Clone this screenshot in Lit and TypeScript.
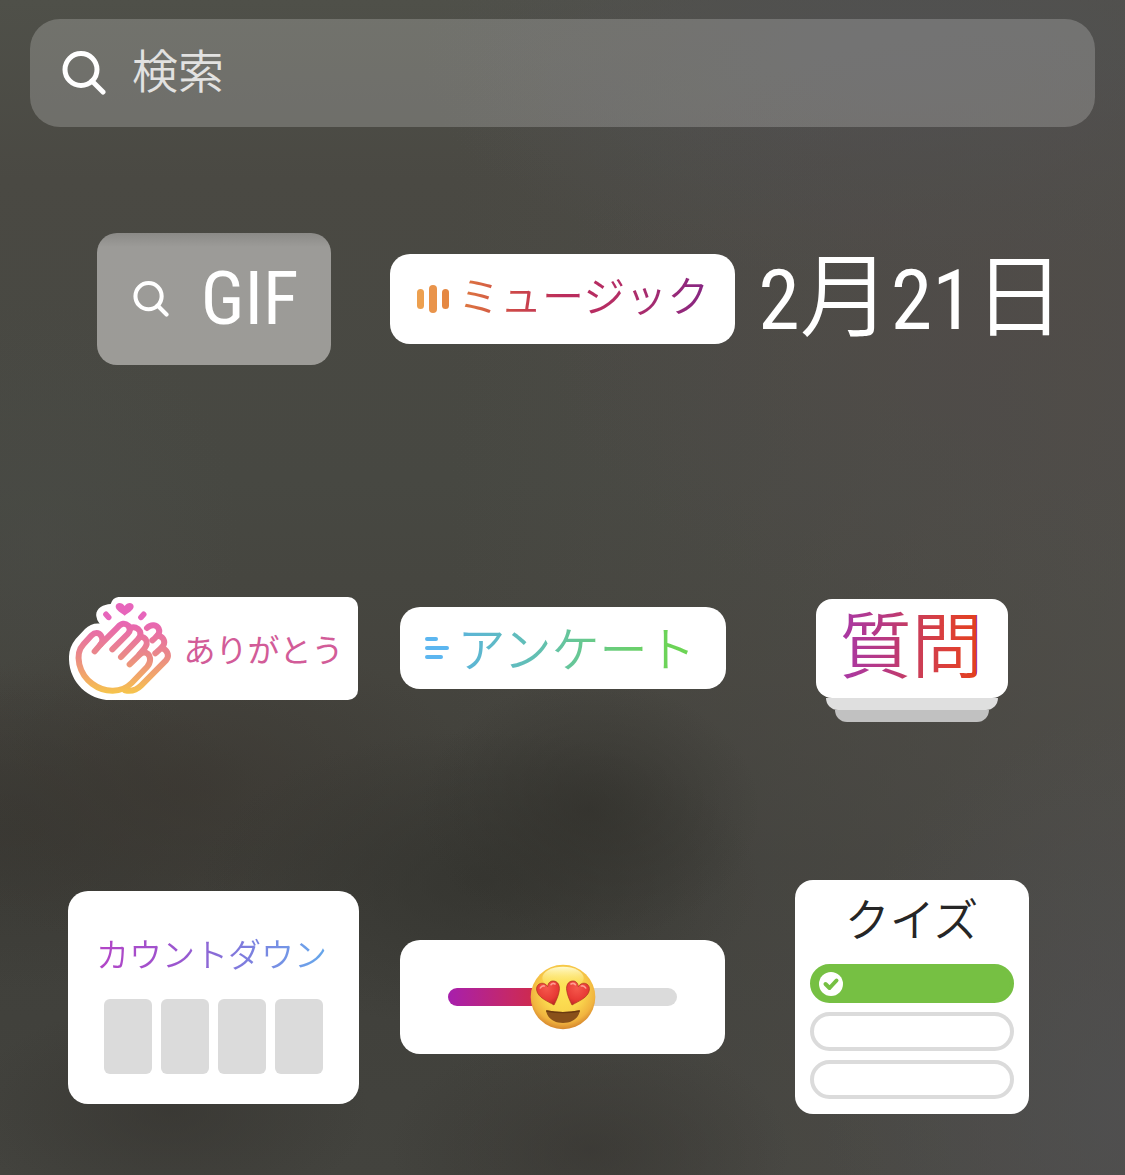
import { LitElement, html, css, svg } from "lit";
import { customElement, property } from "lit/decorators.js";

const magnifier = (cls: string, stroke: number) => html`
  <svg class=${cls} viewBox="0 0 44 44" aria-hidden="true">
    <circle cx="19" cy="18.500" r="16" fill="none" stroke="#fff" stroke-width=${stroke}></circle>
    <path d="M30 30 41 41" fill="none" stroke="#fff" stroke-width=${stroke} stroke-linecap="round"></path>
  </svg>
`;

@customElement("search-field")
class SearchField extends LitElement {
  static styles = css`
    :host {
      display: block;
    }
    .bar {
      display: flex;
      align-items: center;
      gap: 26px;
      height: 108px;
      padding: 0 32px;
      box-sizing: border-box;
      border-radius: 30px;
      background: rgba(255, 255, 255, 0.2);
    }
    .icon {
      width: 44px;
      height: 44px;
      flex: none;
    }
    .input {
      flex: 1;
      min-width: 0;
      height: 80px;
      padding: 0 0 10px;
      box-sizing: border-box;
      border: 0;
      outline: 0;
      background: none;
      color: #fff;
      font-family: "Noto Sans CJK JP", sans-serif;
      font-weight: 350;
      font-size: 46px;
    }
    .input::placeholder {
      color: #e2e2e1;
      opacity: 1;
    }
  `;

  render() {
    return html`
      <label class="bar">
        ${magnifier("icon", 5)}
        <input class="input" type="text" placeholder="検索" aria-label="検索" />
      </label>
    `;
  }
}

@customElement("emoji-slider")
class EmojiSlider extends LitElement {
  @property({ type: Number }) value = 50;

  static styles = css`
    :host {
      display: block;
      width: 325px;
    }
    .card {
      display: flex;
      align-items: center;
      height: 114px;
      padding: 0 48px;
      box-sizing: border-box;
      border-radius: 20px;
      background: #fff;
    }
    .rail {
      position: relative;
      flex: 1;
      height: 18px;
    }
    .range {
      display: block;
      width: 100%;
      height: 18px;
      margin: 0;
      appearance: none;
      border-radius: 9px;
      background: linear-gradient(90deg, #a71fad 0%, #c62866 28%, #d82c2e 50%, #dbdbdb 50%);
    }
    .range::-webkit-slider-thumb {
      appearance: none;
      width: 64px;
      height: 64px;
      background: transparent;
    }
    .face {
      position: absolute;
      top: 50%;
      width: 66px;
      height: 66px;
      transform: translate(-50%, -50%);
      pointer-events: none;
    }
  `;

  render() {
    return html`
      <div class="card">
        <div class="rail">
          <input class="range" type="range" min="0" max="100" .value=${String(this.value)} aria-label="スライダー" />
          <svg class="face" style="left:${this.value}%" viewBox="0 0 198 198" aria-hidden="true">
            <defs>
              <radialGradient id="skin" cx="0.5" cy="0.4" r="0.62">
                <stop offset="0" stop-color="#fde456"></stop>
                <stop offset="0.5" stop-color="#fad64d"></stop>
                <stop offset="0.8" stop-color="#f1b43f"></stop>
                <stop offset="1" stop-color="#d07c2a"></stop>
              </radialGradient>
              <linearGradient id="shine" x1="0" y1="0" x2="0" y2="1">
                <stop offset="0" stop-color="#fffbd0"></stop>
                <stop offset="1" stop-color="#fde654" stop-opacity="0"></stop>
              </linearGradient>
              <radialGradient id="heart" cx="0.45" cy="0.3" r="0.75">
                <stop offset="0" stop-color="#f5584c"></stop>
                <stop offset="0.65" stop-color="#e83a35"></stop>
                <stop offset="1" stop-color="#ba2422"></stop>
              </radialGradient>
            </defs>
            <circle cx="99" cy="99" r="97" fill="url(#skin)"></circle>
            <ellipse cx="99" cy="42" rx="62" ry="34" fill="url(#shine)"></ellipse>
            <path
              d="M72 123C53 112 24 101 20 79C17 62 33 53 45 60C49 62 51 65 53 68C54 56 62 50 71 51C84 52 90 65 88 79C86 95 78 111 72 123Z"
              fill="url(#heart)" stroke="#a72a1d" stroke-width="2"
            ></path>
            <path
              d="M126 123C145 112 174 101 178 79C181 62 165 53 153 60C149 62 147 65 145 68C144 56 136 50 127 51C114 52 108 65 110 79C112 95 120 111 126 123Z"
              fill="url(#heart)" stroke="#a72a1d" stroke-width="2"
            ></path>
            <path d="M31 72Q35 64 43 66M63 62Q68 56 75 60M154 66Q163 64 167 72M123 60Q130 56 136 62" fill="none" stroke="#ff9d92" stroke-width="5" stroke-linecap="round"></path>
            <path d="M48 139Q99 149 150 139C148 160 128 177 99 177C70 177 50 160 48 139Z" fill="#89501a"></path>
            <path d="M49 141Q99 151 149 141" fill="none" stroke="#6b3a10" stroke-width="4"></path>
          </svg>
        </div>
      </div>
    `;
  }
}

@customElement("app-root")
class AppRoot extends LitElement {
  static styles = css`
    :host {
      display: block;
      min-height: 100vh;
      box-sizing: border-box;
      padding: 19px 30px 56px;
      font-family: "Noto Sans CJK JP", sans-serif;
      font-weight: 350;
      background:
        radial-gradient(ellipse 170px 130px at 590px 810px, rgba(48, 47, 42, 0.65), rgba(48, 47, 42, 0)),
        radial-gradient(ellipse 280px 150px at 480px 880px, rgba(50, 50, 45, 0.7), rgba(50, 50, 45, 0)),
        radial-gradient(ellipse 300px 160px at 180px 790px, rgba(57, 52, 46, 0.55), rgba(57, 52, 46, 0)),
        radial-gradient(ellipse 260px 160px at 10px 830px, rgba(54, 53, 48, 0.6), rgba(54, 53, 48, 0)),
        radial-gradient(ellipse 200px 110px at 170px 1110px, rgba(53, 51, 47, 0.6), rgba(53, 51, 47, 0)),
        radial-gradient(ellipse 200px 120px at 590px 1150px, rgba(54, 52, 48, 0.6), rgba(54, 52, 48, 0)),
        radial-gradient(ellipse 200px 240px at 40px 540px, rgba(74, 76, 71, 0.5), rgba(74, 76, 71, 0)),
        radial-gradient(ellipse 460px 300px at 1000px 330px, rgba(80, 75, 73, 0.7), rgba(80, 75, 73, 0)),
        radial-gradient(ellipse 300px 400px at 1125px 1110px, rgba(80, 80, 82, 0.7), rgba(80, 80, 82, 0)),
        radial-gradient(ellipse 480px 220px at 900px 60px, rgba(81, 81, 82, 0.9), rgba(81, 81, 82, 0)),
        linear-gradient(90deg, rgba(66, 66, 60, 0) 40%, rgba(82, 80, 76, 0.7) 100%),
        linear-gradient(180deg, #4f5049 0, #4a4943 180px, #474842 480px, #45443e 680px, #3f3f3a 860px, #43433e 1175px);
    }
    .grid {
      display: grid;
      grid-template-columns: repeat(3, minmax(0, 1fr));
      grid-auto-rows: 240px;
      row-gap: 109px;
      place-items: center;
      margin: 0;
      padding: 52px 9px 0;
      list-style: none;
    }
    .cell {
      display: flex;
      justify-content: center;
    }
    .sticker {
      display: flex;
      align-items: center;
      box-sizing: border-box;
      margin: 0;
      padding: 0;
      border: 0;
      background: #fff;
      color: #262626;
      font: inherit;
      white-space: nowrap;
      cursor: pointer;
    }
    .inked {
      color: transparent;
      background-clip: text;
      -webkit-background-clip: text;
    }

    .gif {
      width: 234px;
      height: 132px;
      padding: 0 32px 0 36px;
      justify-content: space-between;
      border-radius: 20px;
      color: #fff;
      background: linear-gradient(180deg, #8b8a87 0, #9c9b98 14px, #9c9b97 100%);
    }
    .gif-icon {
      width: 36px;
      height: 36px;
    }
    .narrow {
      font-family: "Liberation Sans Narrow", "Roboto Condensed", "Liberation Sans", sans-serif;
      font-weight: 400;
    }
    .gif-text {
      font-size: 74px;
      line-height: 80px;
    }

    .music {
      width: 345px;
      height: 90px;
      padding: 0 22px 0 26px;
      gap: 8px;
      border-radius: 20px;
    }
    .bars {
      width: 34px;
      height: 30px;
      flex: none;
    }
    .music-text {
      padding-bottom: 10px;
      font-size: 42px;
      line-height: 60px;
      background-image: linear-gradient(90deg, #df7c3e 0%, #cd4848 22%, #bb2c5c 42%, #b32d66 66%, #852684 100%);
    }

    .date {
      padding-bottom: 8px;
      background: none;
      color: #fff;
      font-size: 91px;
      line-height: 120px;
    }
    .date-number {
      font-size: 84px;
    }

    .thanks {
      background: none;
    }
    .clap {
      width: 108px;
      height: 103px;
      flex: none;
    }
    .thanks-text {
      height: 103px;
      padding: 0 14px 0 6px;
      border-radius: 0 10px 10px 0;
      background: #fff;
      color: #d25c98;
      font-size: 32px;
      font-weight: 400;
      line-height: 103px;
    }

    .poll {
      width: 326px;
      height: 82px;
      padding: 0 26px 0 24px;
      gap: 8px;
      border-radius: 20px;
    }
    .lines {
      width: 26px;
      height: 24px;
      flex: none;
    }
    .poll-text {
      padding-bottom: 4px;
      font-size: 48px;
      line-height: 60px;
      background-image: linear-gradient(90deg, #5bb4da 0%, #62bfb4 32%, #68c98c 55%, #6cd35a 85%, #6cd552 100%);
    }

    .question {
      flex-direction: column;
      padding-top: 24px;
      background: none;
    }
    .question-card {
      z-index: 1;
      width: 192px;
      height: 99px;
      padding: 0 24px;
      box-sizing: border-box;
      border-radius: 16px;
      background: #fff;
    }
    .question-text {
      display: block;
      font-size: 72px;
      line-height: 84px;
      background-image: linear-gradient(90deg, #a838a6 0%, #b9397f 35%, #c93d5a 55%, #dd3f38 80%, #e2401f 100%);
      background-size: 136px 100%;
    }
    .layer {
      width: 172px;
      height: 12px;
      border-radius: 0 0 14px 14px;
      background: #dfdfdf;
    }
    .layer-back {
      width: 154px;
      background: #c1c1c1;
    }

    .countdown {
      flex-direction: column;
      gap: 18px;
      width: 291px;
      height: 213px;
      padding: 34px 28px 30px;
      border-radius: 20px;
    }
    .countdown-text {
      width: 100%;
      font-size: 33px;
      line-height: 56px;
      text-align: left;
      background-image: linear-gradient(90deg, #b344c6 0%, #9a56cf 35%, #7f78dc 60%, #719ae8 85%, #63a8ea 100%);
    }
    .tiles {
      display: flex;
      gap: 9px;
    }
    .tile {
      width: 48px;
      height: 75px;
      border-radius: 6px;
      background: #dbdbdb;
    }

    .quiz {
      flex-direction: column;
      gap: 9px;
      width: 234px;
      height: 234px;
      padding: 8px 15px 15px;
      border-radius: 18px;
    }
    .quiz-title {
      padding-bottom: 8px;
      font-size: 45px;
      line-height: 59px;
    }
    .option {
      display: flex;
      align-items: center;
      width: 100%;
      height: 39px;
      padding: 0 5px;
      box-sizing: border-box;
      border: 4px solid #dbdbdb;
      border-radius: 20px;
    }
    .option-right {
      border-color: #76c043;
      background: #76c043;
    }
    .check {
      width: 24px;
      height: 24px;
    }
  `;

  private clap() {
    return svg`
      <svg class="clap" viewBox="12 6 324 309" aria-hidden="true">
        <defs>
          <linearGradient id="clap-ink" gradientUnits="userSpaceOnUse" x1="0" y1="50" x2="0" y2="296">
            <stop offset="0" stop-color="#e75fc4"></stop>
            <stop offset="0.2" stop-color="#e86bab"></stop>
            <stop offset="0.55" stop-color="#ea8a86"></stop>
            <stop offset="0.8" stop-color="#f2a867"></stop>
            <stop offset="1" stop-color="#f6c54b"></stop>
          </linearGradient>
        </defs>
        <path fill="#fff" d="M336 6H160Q143 8 137 27C114 28 90 42 94 64Q95 76 104 86C88 84 72 90 60 102L32 132C16 152 11 172 12 194C14 262 70 315 136 315H336Z"></path>
        <g fill="none" stroke="url(#clap-ink)" stroke-width="18" stroke-linecap="round" stroke-linejoin="round">
          <path d="M89 169 107 148Q117 136 108 122C101 111 89 112 80 121L56 147C41 163 37 182 43 208C55 257 100 288 144 287C168 287 185 279 200 264L246 216C258 203 258 186 248 176C241 170 231 172 224 179L194 208"></path>
          <path d="M107 148 158 97C169 84 180 83 190 92C197 101 196 109 188 117L142 163"></path>
          <path d="M194 100C207 93 219 98 225 109C229 119 226 126 218 134L168 186"></path>
          <path d="M228 125C241 126 247 138 245 148C243 156 240 161 224 177"></path>
          <path d="M246 99C259 86 275 89 281 101C286 112 281 120 262 136"></path>
          <path d="M278 122C293 123 300 137 297 147C295 155 288 160 271 175"></path>
          <path d="M294 160C310 169 313 184 303 196L228 272C214 286 199 290 180 286"></path>
        </g>
        <path d="M179 62C168 52 153 46 152 35C152 22 171 20 179 33C187 20 206 22 206 35C205 46 190 52 179 62Z" fill="#e765bb"></path>
        <path d="M123 58 131 67M236 58 228 67" fill="none" stroke="#e765bb" stroke-width="17" stroke-linecap="round"></path>
      </svg>
    `;
  }

  render() {
    return html`
      <search-field></search-field>
      <ul class="grid">
        <li class="cell">
          <button class="sticker gif" type="button">
            ${magnifier("gif-icon", 5)}
            <span class="narrow gif-text">GIF</span>
          </button>
        </li>
        <li class="cell">
          <button class="sticker music" type="button">
            <svg class="bars" viewBox="0 0 34 30" aria-hidden="true">
              <rect x="1" y="5" width="7" height="20" rx="3.500" fill="#eda04f"></rect>
              <rect x="13" y="1" width="8" height="28" rx="4" fill="#e9944b"></rect>
              <rect x="26" y="5" width="7" height="20" rx="3.500" fill="#e58843"></rect>
            </svg>
            <span class="inked music-text">ミュージック</span>
          </button>
        </li>
        <li class="cell">
          <button class="sticker date" type="button">
            <span><span class="narrow date-number">2</span>月<span class="narrow date-number">21</span>日</span>
          </button>
        </li>
        <li class="cell">
          <button class="sticker thanks" type="button">
            ${this.clap()}
            <span class="thanks-text">ありがとう</span>
          </button>
        </li>
        <li class="cell">
          <button class="sticker poll" type="button">
            <svg class="lines" viewBox="0 0 26 24" aria-hidden="true">
              <path d="M3 3H12M3 12H23M3 21H17" stroke="#5cb6f0" stroke-width="4" stroke-linecap="round"></path>
            </svg>
            <span class="inked poll-text">アンケート</span>
          </button>
        </li>
        <li class="cell">
          <button class="sticker question" type="button">
            <span class="question-card"><span class="inked question-text">質問</span></span>
            <span class="layer"></span>
            <span class="layer layer-back"></span>
          </button>
        </li>
        <li class="cell">
          <button class="sticker countdown" type="button">
            <span class="inked countdown-text">カウントダウン</span>
            <span class="tiles">${[0, 1, 2, 3].map(() => html`<span class="tile"></span>`)}</span>
          </button>
        </li>
        <li class="cell"><emoji-slider></emoji-slider></li>
        <li class="cell">
          <button class="sticker quiz" type="button">
            <span class="quiz-title">クイズ</span>
            <span class="option option-right">
              <svg class="check" viewBox="0 0 24 24" aria-hidden="true">
                <circle cx="12" cy="12" r="12" fill="#fff"></circle>
                <path d="M6.500 12 10.500 16 17.500 8.500" fill="none" stroke="#76c043" stroke-width="4" stroke-linecap="round" stroke-linejoin="round"></path>
              </svg>
            </span>
            <span class="option"></span>
            <span class="option"></span>
          </button>
        </li>
      </ul>
    `;
  }
}
